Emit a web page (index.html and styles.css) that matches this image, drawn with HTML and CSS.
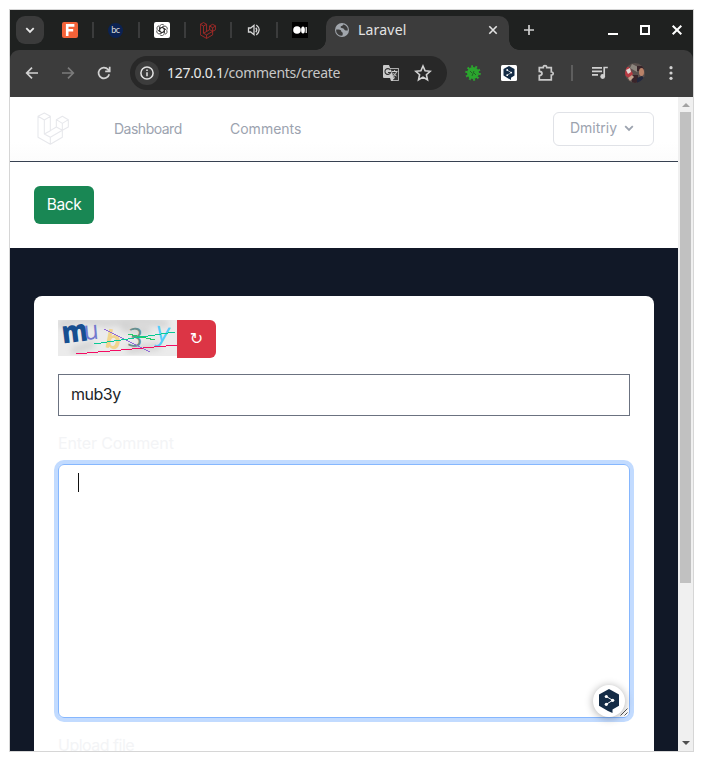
FILE: index.html
```html
<!DOCTYPE html>
<html lang="en">
<head>
<meta charset="utf-8">
<title>Laravel</title>
<link rel="stylesheet" href="styles.css">
</head>
<body>
<div class="window">
  <div class="tabs">
    <div class="tab-search"><svg width="10" height="10" viewBox="0 0 10 10" fill="none" stroke="#e8e8e8" stroke-width="1.8"><path d="M1.3 3.2 5 6.9 8.7 3.2"/></svg></div>
    <div class="pinned"><svg width="16" height="16" viewBox="0 0 16 16"><rect width="16" height="16" rx="2" fill="#f36238"/><path d="M5.2 14V3.4H12.4M5.2 8.2h6" fill="none" stroke="#fff" stroke-width="2.6"/></svg></div>
    <div class="pinned"><span class="bc">bc</span></div>
    <div class="pinned"><svg width="16" height="16" viewBox="0 0 16 16"><rect width="16" height="16" rx="2" fill="#fff"/><g fill="none" stroke="#333" stroke-width=".75"><path id="petal" d="M5.7 9.4V4.8a2.5 2.5 0 0 1 4.5-1.4M5.7 6.6 8 5.3l3.8 2.2"/><use href="#petal" transform="rotate(60 8 8)"/><use href="#petal" transform="rotate(120 8 8)"/><use href="#petal" transform="rotate(180 8 8)"/><use href="#petal" transform="rotate(240 8 8)"/><use href="#petal" transform="rotate(300 8 8)"/></g></svg></div>
    <div class="pinned"><svg width="16" height="17" viewBox="113 53 95 98" fill="none" stroke="#b02b28" stroke-width="5" stroke-linejoin="round"><path id="mark" d="M115 65 134 55 152 65 134 76ZV128L152 149 188 128V107L206 97V75L188 65 170 75V97L188 107 152 128V149M134 76V118L152 128M152 65V108L134 118M152 108 170 97M170 75 188 86 206 75M188 86V107"/></svg></div>
    <div class="pinned"><svg width="14" height="14" viewBox="0 0 14 14" fill="none" stroke="#d5d5d5" stroke-width="1.3"><path d="M1.5 5h2.2L7 2.3v9.4L3.7 9H1.5Z"/><path d="M8.8 4.7q2 2.3 0 4.6M9.3 2q5.8 4.6 0 10"/></svg></div>
    <div class="pinned"><svg width="16" height="16" viewBox="0 0 16 16"><rect width="16" height="16" fill="#000"/><circle cx="5" cy="8" r="3.8" fill="#fff"/><ellipse cx="11" cy="8" rx="1.9" ry="3.5" fill="#fff"/><path d="M14.2 5v6" stroke="#fff" stroke-width="1.2"/></svg></div>
    <div class="active-tab">
      <svg width="16" height="16" viewBox="0 0 16 16"><circle cx="8" cy="8" r="7" fill="#a1a6ac"/><path d="M2.2 7.6c2.6-.3 5 .2 5 1.4 0 1.6 1.7.8 1.6 2.4l-.3 2.2C5 14.4 1.6 11.5 2.2 7.6ZM9.2 2.4c-.4 1.7-2.6 1.2-2.6 2.6 0 1.3 2.1.8 2.9 1.6.9.9 1 1.9 2.3 1.9l1.9.1c.7-3-1.5-5.6-4.5-6.2Z" fill="#3c3c3c"/></svg>
      <span class="tab-title">Laravel</span>
      <svg width="10" height="10" viewBox="0 0 10 10" stroke="#e3e3e3" stroke-width="1.6"><path d="m1.3 1.3 7.4 7.4m0-7.4L1.3 8.7"/></svg>
    </div>
    <svg class="new-tab" width="12" height="12" viewBox="0 0 12 12" stroke="#d0d0d0" stroke-width="1.7"><path d="M6 1v10M1 6h10"/></svg>
    <div class="controls">
      <svg width="12" height="12" viewBox="0 0 12 12"><path d="M1 9h10v2H1z" fill="#fff"/></svg>
      <svg width="12" height="12" viewBox="0 0 12 12"><path d="M2 2h8v8H2z" fill="none" stroke="#fff" stroke-width="2"/></svg>
      <svg width="12" height="12" viewBox="0 0 12 12"><path d="m1.7 1.7 8.6 8.6m0-8.6-8.6 8.6" stroke="#fff" stroke-width="2"/></svg>
    </div>
  </div>
  <div class="toolbar">
    <div class="nav-icons">
      <svg width="16" height="16" viewBox="0 0 16 16" fill="none" stroke="#d2d2d2" stroke-width="1.7"><path d="M14 8H3M8 2.7 2.7 8 8 13.3"/></svg>
      <svg width="16" height="16" viewBox="0 0 16 16" fill="none" stroke="#7b7b7b" stroke-width="1.7"><path d="M2 8h11M8 2.7 13.3 8 8 13.3"/></svg>
      <svg width="16" height="16" viewBox="0 0 16 16" fill="none" stroke="#d2d2d2" stroke-width="1.7"><path d="M13.2 9.2A5.4 5.4 0 1 1 12 4.4l1.3 1.5M13.7 1.8v4.6H9.2"/></svg>
    </div>
    <div class="omnibox">
      <span class="info"><svg width="16" height="16" viewBox="0 0 16 16" fill="none" stroke="#e3e3e3" stroke-width="1.5"><circle cx="8" cy="8" r="6.1"/><path d="M8 7.2v4M8 4.4v1.5"/></svg></span>
      <span class="url"><b>127.0.0.1</b>/comments/create</span>
      <svg class="translate" width="18" height="18" viewBox="0 0 18 18"><path d="M2 1h5l1.2 3H16q1 0 1 1v11q0 1-1 1H9l-1-3H2q-1 0-1-1V2q0-1 1-1Z" fill="#cacaca"/><path d="M8.6 5H16v11h-5l2-2M9 5l3 9" fill="#333" stroke="#333" stroke-width=".4"/><path d="M8.3 5.9A2.9 2.9 0 1 0 8.6 8.5H6" fill="none" stroke="#333" stroke-width="1.1"/><path d="M10 7.5h5.5M12.6 6v1.5M14.5 8q-.8 2.5-3 4M11.5 9q1 2 3 3" fill="none" stroke="#ccc"/></svg>
      <svg width="18" height="18" viewBox="0 0 18 18" fill="none" stroke="#d2d2d2" stroke-width="1.6"><path d="m9 2 2.1 4.8 5.1.5-3.8 3.4 1.1 5.1L9 13.1l-4.5 2.7 1.1-5.1-3.8-3.4 5.1-.5Z"/></svg>
    </div>
    <svg class="bug" width="18" height="18" viewBox="0 0 18 18"><circle cx="9" cy="9" r="6" fill="#2ba52e"/><circle cx="9" cy="9" r="6.6" fill="none" stroke="#2ba52e" stroke-width="2.4" stroke-dasharray="1.9 2.25"/><path d="m6 7 2 2m2 0 2 2M8 12l2-5" stroke="#216524" stroke-width="1"/></svg>
    <svg class="deepl" width="16" height="16" viewBox="0 0 16 16"><rect width="16" height="16" rx="1.5" fill="#fff"/><path d="m8 1 5.5 3v6.5L10 12.7V15l-3.2-1.8-4.3-2.7V4Z" fill="#142c46"/><path d="m6.2 5 4 2.6-4 2.6" fill="none" stroke="#fff" stroke-width=".6"/><g fill="#fff"><circle cx="6.2" cy="5" r=".9"/><circle cx="10.2" cy="7.6" r=".9"/><circle cx="6.2" cy="10.2" r=".9"/></g></svg>
    <svg class="puzzle" width="18" height="18" viewBox="0 0 18 18"><path d="M2.3 3.7h4V3q0-1.3 1.7-1.3T9.7 3v.7h4.6V8h.5q1.4.1 1.4 1.5t-1.4 1.5h-.5v4.8h-12v-4.2q2.7-.2 2.7-2.1T2.3 7.4Z" fill="none" stroke="#c9c9c9" stroke-width="1.7"/></svg>
    <span class="divider"></span>
    <svg class="music" width="18" height="16" viewBox="0 0 18 16"><path d="M1 2.8h10M1 6.3h10M1 9.8h6M13.2 11V2.5h3.6" fill="none" stroke="#d0d0d0" stroke-width="1.7"/><circle cx="11.7" cy="11.5" r="2.4" fill="#d0d0d0"/></svg>
    <svg class="avatar" width="20" height="20" viewBox="0 0 20 20"><defs><clipPath id="round"><circle cx="10" cy="10" r="10"/></clipPath></defs><g clip-path="url(#round)"><path fill="#5a504d" d="M0 0h20v20H0z"/><path fill="#8d867e" d="m7 1 6 3-1 5-7-4Z"/><path fill="#b83a42" d="M0 4h4l4 7-4 4-5-3Z"/><path fill="#e2d8d5" d="m1 7 4-2 1 4-3 2Z"/><path fill="#39252a" d="M12 3h7v5h-7zM7 12h6v8H7z"/><ellipse cx="16.5" cy="9" rx="2.5" ry="4" fill="#b98268"/><path fill="#c3a08c" d="m3 15 4-3 2 2-4 4Z"/><path fill="#23283d" d="m12 15 5-2 3 3-5 4h-3z"/></g></svg>
    <svg class="more" width="4" height="16" viewBox="0 0 4 16" fill="#d2d2d2"><circle cx="2" cy="2.7" r="1.6"/><circle cx="2" cy="8" r="1.6"/><circle cx="2" cy="13.3" r="1.6"/></svg>
  </div>
  <div class="viewport">
    <div class="page">
      <nav class="navbar">
        <svg class="logo" width="33" height="34" viewBox="112 52 99 102" fill="none" stroke="#e7e8ec" stroke-width="3.2" stroke-linejoin="round"><use href="#mark"/></svg>
        <a class="link dashboard">Dashboard</a>
        <a class="link comments">Comments</a>
        <button class="user"><span>Dmitriy</span><svg width="10" height="10" viewBox="0 0 10 10" fill="none" stroke="#9ca3af" stroke-width="1.8"><path d="M1.2 3.2 5 7l3.8-3.8"/></svg></button>
      </nav>
      <header class="subheader"><a class="back">Back</a></header>
      <main class="main">
        <form class="card">
          <div class="captcha">
            <svg width="119" height="36" viewBox="0 0 119 36">
              <defs><filter id="soft"><feGaussianBlur stdDeviation="3"/></filter></defs>
              <path d="M0 0h119v36H0z" fill="#ebebeb"/>
              <path d="M0 5 20 0 48 3 80 0l30 4M14 31l22-7M63 8l29 3M69 30l33-4" stroke="#d2d2d2" stroke-width="7" fill="none" filter="url(#soft)"/>
              <g class="glyphs">
                <text class="g-m" transform="translate(5 23.5) rotate(-7) scale(.96 1.13)">m</text>
                <text class="g-u" transform="translate(26.5 20) rotate(-5) scale(1 1.1)">u</text>
                <text class="g-b" transform="translate(46 27) rotate(11)">b</text>
                <text class="g-3" transform="translate(69 26) rotate(5)">3</text>
                <text class="g-y" transform="translate(97 20) rotate(9)">y</text>
              </g>
              <g fill="none" shape-rendering="crispEdges"><path d="M46 9 92 32" stroke="#916bd6"/><path d="m36 24 81-12" stroke="#08c995"/><path d="m70 14 27 6" stroke="#22cb68"/><path d="m18 34 101-9" stroke="#f40c63"/></g>
            </svg>
            <button class="reload" type="button">↻</button>
          </div>
          <div class="answer">mub3y</div>
          <label class="label">Enter Comment</label>
          <div class="textarea"><span class="caret"></span>
            <svg class="grip" width="8" height="8" viewBox="0 0 8 8" stroke="#555"><path d="m.5 7.5 7-7M4.5 7.5l3-3"/></svg>
            <span class="assistant"><svg width="20" height="24" viewBox="0 0 20 24"><path d="m10 0 10 5.6v11.2l-6.5 3.7V24L9 21.9 0 16.8V5.6Z" fill="#142c46"/><path d="m7.3 7.5 6.4 3.8-6.4 4" fill="none" stroke="#fff" stroke-width="1"/><g fill="#fff"><circle cx="7.3" cy="7.5" r="1.6"/><circle cx="13.7" cy="11.3" r="1.6"/><circle cx="7.3" cy="15.3" r="1.6"/></g></svg></span>
          </div>
          <label class="label upload">Upload file</label>
        </form>
      </main>
    </div>
    <div class="scrollbar"><span class="arrow up"></span><span class="thumb"></span><span class="arrow down"></span></div>
  </div>
</div>
</body>
</html>
```
FILE: styles.css
```css
* { box-sizing: border-box; }
body { margin: 0; padding: 9px; background: #fff; font-family: Inter, "Noto Sans", sans-serif; }
svg { display: block; flex: none; }
.window { width: 685px; height: 743px; border: 1px solid #d6d6d6; display: flex; flex-direction: column; overflow: hidden; background: #1f2120; }
.tabs { height: 40px; flex: none; display: flex; align-items: center; padding-left: 6px; background: #1f2120; }
.tab-search { width: 28px; height: 28px; border-radius: 9px; background: #3b3b3b; display: grid; place-items: center; margin-right: 4px; }
.pinned { width: 46px; height: 16px; display: grid; place-items: center; border-right: 2px solid #3b3c3c; padding-right: 1px; }
.pinned:nth-child(7) { border-right-color: transparent; }
.bc { width: 15px; height: 15px; border-radius: 50%; background: #0b2252; color: #ddd; font: 9px/13px Lato, sans-serif; text-align: center; letter-spacing: -.5px; }
.active-tab { position: relative; align-self: flex-end; width: 183px; height: 34px; margin-left: 2px; padding: 0 11px 6px 8px; background: #3c3c3c; border-radius: 10px 10px 0 0; display: flex; align-items: center; }
.active-tab::before, .active-tab::after { content: ""; position: absolute; bottom: 0; width: 10px; height: 10px; }
.active-tab::before { left: -10px; background: radial-gradient(circle at 0 0, #1f2120 9.5px, #3c3c3c 10px); }
.active-tab::after { right: -10px; background: radial-gradient(circle at 100% 0, #1f2120 9.5px, #3c3c3c 10px); }
.tab-title { flex: 1; margin-left: 8px; color: #e3e3e3; font: 14px/20px "Noto Sans", sans-serif; letter-spacing: .2px; }
.new-tab { margin-left: 14px; }
.controls { margin-left: auto; margin-right: 10px; display: flex; gap: 20px; }
.toolbar { height: 47px; flex: none; display: flex; align-items: center; padding-left: 14px; border-radius: 9px 9px 0 0; background: #3c3c3c; padding-bottom: 1px; }
.nav-icons { display: flex; gap: 20px; }
.omnibox { width: 317px; height: 34px; margin-left: 18px; padding: 0 15px 0 5px; border-radius: 17px; background: #282828; display: flex; align-items: center; }
.info { width: 24px; height: 24px; flex: none; border-radius: 50%; background: #3c3c3c; display: grid; place-items: center; }
.url { margin-left: 8px; color: #c7c7c7; font: 14px/20px "Noto Sans", sans-serif; letter-spacing: -.29px; white-space: nowrap; }
.url b { color: #e8e8e8; font-weight: 400; }
.translate { margin-left: auto; margin-right: 14px; }
.bug { margin-left: 17px; }
.deepl { margin-left: 19px; }
.puzzle { margin-left: 20px; }
.divider { width: 2px; height: 16px; margin-left: 16px; background: #5e5e5e; }
.music { margin-left: 18px; }
.avatar { margin-left: 16px; }
.more { margin-left: 24px; }
.viewport { flex: 1; min-height: 0; display: flex; background: #fff; }
.page { width: 668px; overflow: hidden; display: flex; flex-direction: column; }
.navbar { height: 65px; flex: none; display: flex; align-items: center; padding: 0 24px 1px 27px; background: linear-gradient(#fff 70%, #fcfcfc); border-bottom: 1px solid #374151; }
.link { color: #9ca3af; font-size: 14px; line-height: 20px; letter-spacing: -.5px; }
.dashboard { width: 116px; margin-left: 44px; }
.comments { letter-spacing: 0; }
.user { width: 101px; height: 34px; margin-left: auto; padding: 0 0 1px 16px; border: 1px solid #e0e2e7; border-radius: 6px; background: #fff; color: #9ca3af; display: flex; align-items: center; gap: 7px; font: 14px/20px Inter, sans-serif; letter-spacing: 0; }
.user span { width: 47px; white-space: nowrap; text-align: left; }
.subheader { height: 86px; flex: none; padding: 24px; background: #fff; }
.back { display: block; width: 60px; height: 38px; border-radius: 6px; background: #198754; color: #fff; font-size: 15.5px; line-height: 38px; text-align: center; letter-spacing: -.45px; }
.main { flex: 1; min-height: 0; padding: 48px 24px 0; background: #111827; }
.card { height: 600px; padding: 24px; border-radius: 8px; background: #fff; }
.captcha { height: 38px; display: flex; align-items: flex-start; }
.reload { width: 39px; height: 38px; padding: 0; border: 0; border-radius: 0 6px 6px 0; background: #dc3545; color: #fff; font: 16px/36px "DejaVu Sans", sans-serif; }
.glyphs { font-family: "Open Sans", sans-serif; }
.g-m { font-size: 27px; font-weight: 800; fill: #174f91; }
.g-u { font-size: 24px; fill: #7379ce; }
.g-b { font-size: 25px; font-weight: 700; fill: #f1d48e; }
.g-3 { font-size: 26px; fill: #679090; }
.g-y { font-size: 27px; fill: #55cdfa; }
.answer { height: 42px; margin-top: 16px; padding: 0 12px; border: 1px solid #6b7280; color: #212529; font-size: 16px; line-height: 39px; letter-spacing: -.5px; }
.label { display: block; margin-top: 16px; height: 24px; font-size: 16px; line-height: 23px; color: #f3f4f6; letter-spacing: -.12px; white-space: nowrap; }
.upload { letter-spacing: -.5px; }
.textarea { position: relative; height: 254px; margin-top: 8px; border: 1px solid #86b7fe; border-radius: 6px; box-shadow: 0 0 0 4px #c2dbff; padding: 8px 19px; }
.caret { display: block; width: 1px; height: 19px; background: #111; }
.grip { position: absolute; right: 1px; bottom: 1px; }
.assistant { position: absolute; right: 4px; bottom: 0; width: 32px; height: 32px; border-radius: 50%; background: #fff; box-shadow: 0 1px 8px #0005; display: grid; place-items: center; }
.scrollbar { width: 15px; display: flex; flex-direction: column; align-items: center; background: #f0f0f0; }
.arrow { width: 0; height: 0; border: 4px solid transparent; }
.up { border-top: 0; border-bottom-color: #a2a2a2; margin-top: 6px; margin-bottom: 5px; }
.thumb { width: 11px; height: 471px; background: #c1c1c1; }
.down { margin-top: auto; margin-bottom: 6px; border-bottom: 0; border-top-color: #505050; }
```
